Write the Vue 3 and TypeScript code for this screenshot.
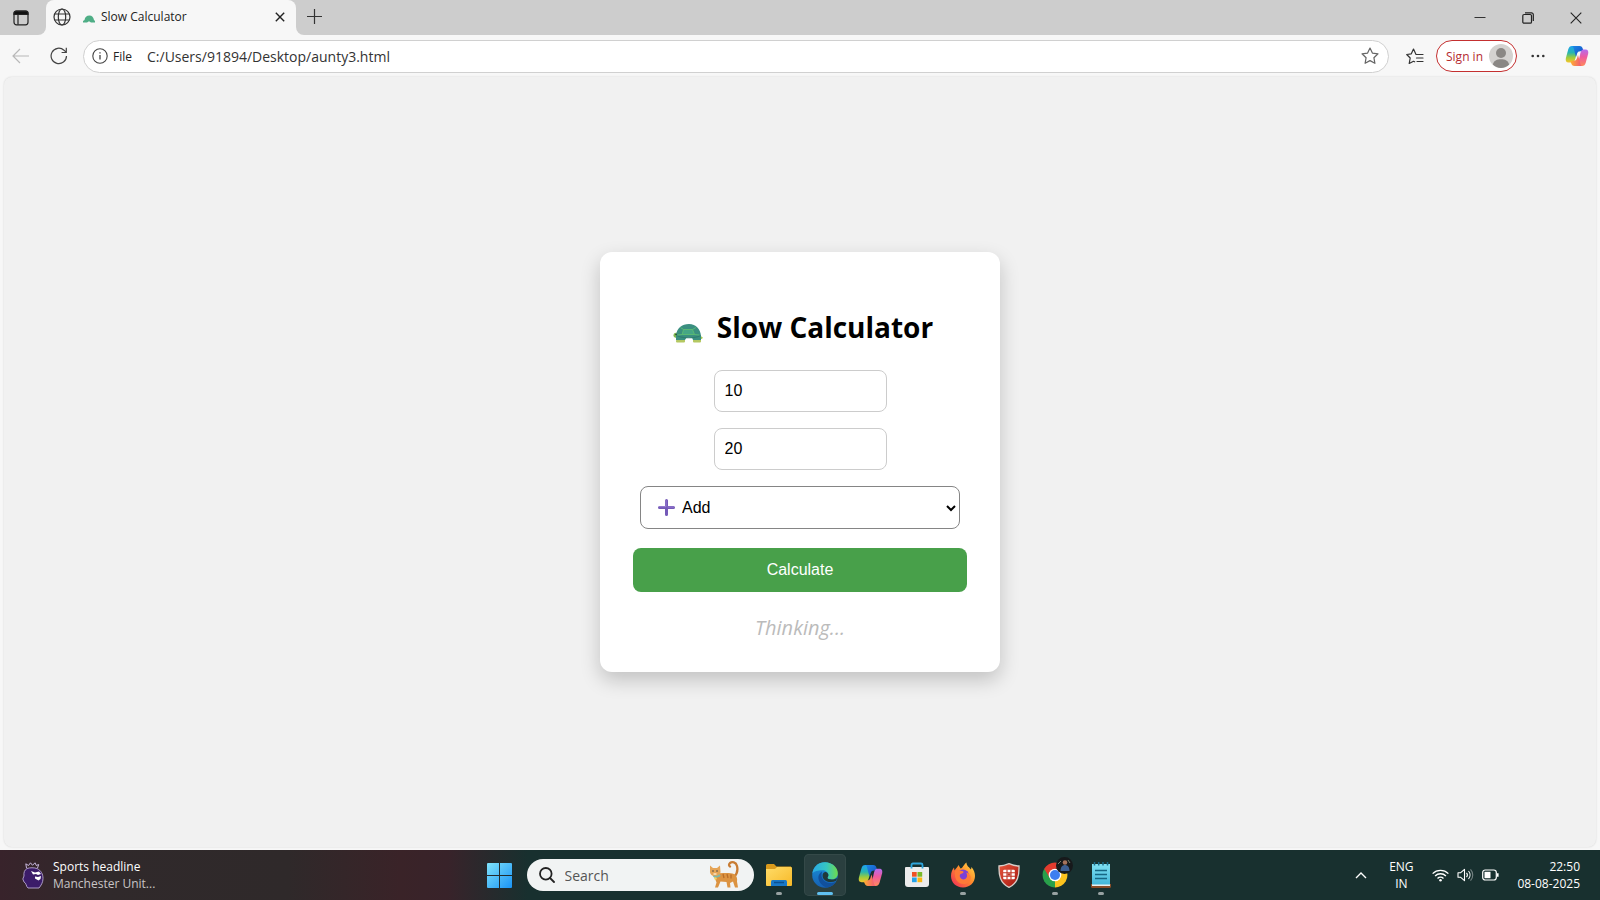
<script setup lang="ts">
import { ref } from 'vue'

const first = ref<number>(10)
const second = ref<number>(20)
const operation = ref<string>('add')
const query = ref<string>('')
const address = ref<string>('C:/Users/91894/Desktop/aunty3.html')
const status = ref<string>('Thinking...')

const operations: { value: string; label: string }[] = [
  { value: 'add', label: 'Add' },
  { value: 'subtract', label: 'Subtract' },
  { value: 'multiply', label: 'Multiply' },
  { value: 'divide', label: 'Divide' },
]

let timer: number | undefined

function calculate(): void {
  status.value = 'Thinking...'
  window.clearTimeout(timer)
  timer = window.setTimeout(() => {
    const a = first.value
    const b = second.value
    const results: Record<string, number> = {
      add: a + b,
      subtract: a - b,
      multiply: a * b,
      divide: a / b,
    }
    status.value = String(results[operation.value])
  }, 5000)
}
</script>

<template>
  <div class="screen">
    <svg class="defs" aria-hidden="true">
      <defs>
        <linearGradient id="cop-a" x1="0" y1="0" x2="0" y2="1">
          <stop offset="0" stop-color="#1fa2f0" /><stop offset=".4" stop-color="#27b5b0" />
          <stop offset=".7" stop-color="#9ccb3c" /><stop offset="1" stop-color="#f6c52c" />
        </linearGradient>
        <linearGradient id="cop-b" x1="0" y1="1" x2="0" y2="0">
          <stop offset="0" stop-color="#b36cf0" /><stop offset=".45" stop-color="#ee5aa0" />
          <stop offset="1" stop-color="#ff8a5a" />
        </linearGradient>
        <linearGradient id="cop-c" x1="0" y1="0" x2="1" y2="1">
          <stop offset="0" stop-color="#1c8be6" /><stop offset="1" stop-color="#1746c4" />
        </linearGradient>
        <linearGradient id="cop-d" x1="1" y1="0" x2="0" y2="0">
          <stop offset="0" stop-color="#ffb02e" /><stop offset="1" stop-color="#f0527c" />
        </linearGradient>
        <symbol id="copilot" viewBox="0 0 24 24">
          <path d="M7 2h7l-3.800 13c-.7 2.300-1.700 3.500-4 3.500H3.500C1 18.500.3 16.500.9 14L3.200 5.500C3.900 3 5 2 7 2z" fill="url(#cop-a)" />
          <path d="M7 2h7.500c2 0 2.800 1 3.400 3l.7 2.300h-3.100c-2 0-3 .8-3.500 2.500L11 13 9 5.500C8.600 3.500 8 2.200 7 2z" fill="url(#cop-c)" />
          <g transform="rotate(180 12 12)">
            <path d="M7 2h4.500L8.600 15c-.7 2.300-1.300 3.500-3 3.500H3.500C1 18.500.3 16.500.9 14L3.200 5.500C3.900 3 5 2 7 2z" fill="url(#cop-b)" />
            <path d="M7 2h7.500c2 0 2.800 1 3.400 3l.7 2.300h-3.100c-2 0-3 .8-3.500 2.500L11 13 9 5.500C8.600 3.500 8 2.200 7 2z" fill="url(#cop-d)" />
          </g>
        </symbol>
        <symbol id="turtle" viewBox="0 0 30 20">
          <path d="M4.500 10C2 9 .5 10.500.5 12.200c0 1.800 1.200 2.600 3.500 2.800z" fill="#7fb850" />
          <path d="M27 12.500l2.800 2-.8 1.400-3-.5z" fill="#a6c850" />
          <path d="M3.500 15h8.500v3.500a1 1 0 0 1-1 1H4a1 1 0 0 1-1-1zM20 15h8v3.500a1 1 0 0 1-1 1h-6a1 1 0 0 1-1-1z" fill="#b4c862" />
          <path d="M3 17V13C3.500 5 9 1 16 1c7 0 11.500 5 12 12v4h-8l-1-2.500h-5.500L12 17z" fill="#3a8f80" />
          <path d="M4 12.500c4 3 19 3 23.500 0" fill="none" stroke="#2f7d70" stroke-width="1.200" />
          <path d="M10.500 6.500h9l2 5H9.200zM10.500 6.500L7.500 4.500M19.500 6.500l3.500-2M9.200 11.500l-5 .5M21.500 11.500l5 .5" fill="#46a685" stroke="#5cbc72" stroke-width=".9" />
          <circle cx="3" cy="11.500" r=".8" fill="#243b2b" />
        </symbol>
        <linearGradient id="win" gradientUnits="userSpaceOnUse" x1="0" y1="0" x2="25" y2="25">
          <stop offset="0" stop-color="#7fe3fb" /><stop offset="1" stop-color="#1a93f5" />
        </linearGradient>
        <linearGradient id="folder" x1="0" y1="0" x2="1" y2="1">
          <stop offset="0" stop-color="#ffdc68" /><stop offset="1" stop-color="#f7b928" />
        </linearGradient>
        <linearGradient id="edge-top" x1="0" y1="0" x2="1" y2="0">
          <stop offset="0" stop-color="#2aa9e6" /><stop offset=".55" stop-color="#35c5c2" />
          <stop offset="1" stop-color="#6fdc4c" />
        </linearGradient>
        <linearGradient id="edge-low" x1="0" y1="0" x2="0" y2="1">
          <stop offset="0" stop-color="#1b93dc" /><stop offset="1" stop-color="#155fb2" />
        </linearGradient>
        <linearGradient id="fox" x1="1" y1="0" x2="0" y2="1">
          <stop offset="0" stop-color="#ffe04a" /><stop offset=".45" stop-color="#ff8c2c" />
          <stop offset="1" stop-color="#f0245c" />
        </linearGradient>
        <linearGradient id="shield" x1="0" y1="0" x2="1" y2="1">
          <stop offset="0" stop-color="#e9573c" /><stop offset="1" stop-color="#a3150f" />
        </linearGradient>
        <linearGradient id="note" x1="0" y1="0" x2="0" y2="1">
          <stop offset="0" stop-color="#7fe0f2" /><stop offset="1" stop-color="#3fb4d8" />
        </linearGradient>
      </defs>
    </svg>

    <header class="tabstrip">
      <button class="tab-actions" aria-label="Tab actions">
        <svg width="16" height="16" viewBox="0 0 16 16" fill="none" stroke="#222" stroke-width="1.200">
          <rect x="1" y="1.200" width="14" height="13.600" rx="2.500" />
          <path d="M1 3.200a2 2 0 0 1 2-2h10a2 2 0 0 1 2 2V4.500H1z" fill="#111" />
          <path d="M5 5v9.500" />
        </svg>
      </button>
      <div class="tab">
        <svg width="18" height="18" viewBox="0 0 18 18" fill="none" stroke="#333" stroke-width="1.200">
          <circle cx="9" cy="9" r="8" /><ellipse cx="9" cy="9" rx="3.700" ry="8" />
          <path d="M1.700 6h14.600M1.700 12h14.600" />
        </svg>
        <svg class="tab-turtle" width="12" height="8" viewBox="0 0 12 8">
          <path d="M0 7.500V6l1.500-1C2 2 3.500.5 6.500.5c2.500 0 4 2 4.500 4.500l1 1v1.500H8L6 6.300 4 7.500z" fill="#4fae86" />
        </svg>
        <span class="tab-title">Slow Calculator</span>
        <button aria-label="Close tab">
          <svg width="10" height="10" viewBox="0 0 10 10" stroke="#222" stroke-width="1.400"><path d="M.8.8l8.400 8.400M9.200.8L.8 9.200" /></svg>
        </button>
      </div>
      <button class="new-tab" aria-label="New tab">
        <svg width="15" height="15" viewBox="0 0 15 15" stroke="#333" stroke-width="1.200"><path d="M7.500 0v15M0 7.500h15" /></svg>
      </button>
      <div class="window-controls">
        <button aria-label="Minimize">
          <svg width="12" height="12" viewBox="0 0 12 12" stroke="#333"><path d="M.5 5.500h11" /></svg>
        </button>
        <button aria-label="Restore">
          <svg width="12" height="12" viewBox="0 0 12 12" fill="none" stroke="#222" stroke-width="1.200">
            <rect x=".8" y="2.500" width="8.700" height="8.700" rx="1.300" />
            <path d="M3 .8h6.500a1.800 1.800 0 0 1 1.800 1.800V9" />
          </svg>
        </button>
        <button aria-label="Close window">
          <svg width="12" height="12" viewBox="0 0 12 12" stroke="#222" stroke-width="1.100"><path d="M.7.7l10.600 10.600M11.300.7L.7 11.300" /></svg>
        </button>
      </div>
    </header>

    <nav class="toolbar">
      <button class="tool" aria-label="Back">
        <svg width="17" height="16" viewBox="0 0 17 16" fill="none" stroke="#b8b8b8" stroke-width="1.200"><path d="M17 8H1M8 1L1 8l7 7" /></svg>
      </button>
      <button class="tool" aria-label="Refresh">
        <svg width="18" height="18" viewBox="0 0 18 18" fill="none" stroke="#444" stroke-width="1.200">
          <path d="M16.500 9A7.700 7.700 0 1 1 14 3.200l2 2M16.300.8v4.700h-4.700" />
        </svg>
      </button>
      <div class="address">
        <svg width="16" height="16" viewBox="0 0 16 16" fill="none" stroke="#444" stroke-width="1.100">
          <circle cx="8" cy="8" r="7.200" /><path d="M8 7v4.500M8 4.200v1.400" stroke-width="1.300" />
        </svg>
        <span class="scheme">File</span>
        <input v-model="address" type="text" aria-label="Address" />
        <button aria-label="Add to favorites">
          <svg width="18" height="18" viewBox="0 0 18 18" fill="none" stroke="#666" stroke-width="1.200" stroke-linejoin="round">
            <path d="M9 1l2.400 5.100 5.600.7-4.100 3.900 1 5.600L9 13.600l-4.900 2.700 1-5.600L1 6.800l5.600-.7z" />
          </svg>
        </button>
      </div>
      <button class="tool favorites" aria-label="Favorites">
        <svg width="18" height="17" viewBox="0 0 18 17" fill="none" stroke="#333" stroke-width="1.200" stroke-linejoin="round" stroke-linecap="round">
          <path d="M11 6.500h-1L7.500 1 5.300 5.800l-4.600.7 3.500 3.500-1 5.500 4.300-2.200 1.200.5M11 6.500h6M10.500 10H17M11 13.500h6" />
        </svg>
      </button>
      <button class="sign-in">
        <span>Sign in</span>
        <svg width="24" height="24" viewBox="0 0 24 24">
          <circle cx="12" cy="12" r="12" fill="#d4d2d0" /><circle cx="12" cy="9" r="5" fill="#8a8784" />
          <path d="M3.800 20.500c1-4 4.200-5.300 8.200-5.300s7.200 1.300 8.200 5.300A12 12 0 0 1 12 24a12 12 0 0 1-8.200-3.500z" fill="#8a8784" />
        </svg>
      </button>
      <button class="tool more" aria-label="Settings and more">
        <svg width="14" height="4" viewBox="0 0 14 4" fill="#333"><circle cx="1.700" cy="2" r="1.300" /><circle cx="7" cy="2" r="1.300" /><circle cx="12.300" cy="2" r="1.300" /></svg>
      </button>
      <button class="tool" aria-label="Copilot"><svg width="24" height="24"><use href="#copilot" /></svg></button>
    </nav>

    <main class="page">
      <form class="card" @submit.prevent="calculate">
        <h1><svg width="30" height="20" aria-hidden="true"><use href="#turtle" /></svg><span>Slow Calculator</span></h1>
        <input v-model.number="first" class="number" type="number" aria-label="First number" />
        <input v-model.number="second" class="number" type="number" aria-label="Second number" />
        <div class="picker">
          <svg class="plus" width="17" height="17" viewBox="0 0 17 17" stroke-linecap="round">
            <path d="M8.500 1.500v14M1.500 8.500h14" stroke="#7459b8" stroke-width="3" />
            <path d="M8 1.500v6.200H1.500M10 8h5.500" stroke="#9a80d2" fill="none" />
          </svg>
          <select v-model="operation" aria-label="Operation">
            <option v-for="item in operations" :key="item.value" :value="item.value">{{ item.label }}</option>
          </select>
          <svg class="arrow" width="10" height="7" viewBox="0 0 10 7" fill="none" stroke="#000" stroke-width="2"><path d="M1 1l4 4 4-4" /></svg>
        </div>
        <button class="calculate" type="submit">Calculate</button>
        <p class="status">{{ status }}</p>
      </form>
    </main>

    <footer class="taskbar">
      <button class="widget">
        <svg width="22" height="27" viewBox="0 0 22 27">
          <path d="M4.500 6L3.800 1.800l2.700 1.700L8.500.8l2 2.500L13 .8l1.300 2.700 2.400-1L15.500 6" fill="none" stroke="#c9b9de" stroke-width="1" />
          <path d="M5 6.500c3-1 7-1 10 0 4 2 6 5.500 6 10 0 4-2 7-4 9.500H6C4 24.500 4.500 21 2 20l-1.200-3L2 14c-.5-3.500.5-6 3-7.500z" fill="#3b1c69" stroke="#b9a9d2" stroke-width=".9" />
          <path d="M9 9l4 1.500 4-1 2 2.500-3 1-2-1-3 .5zM13 14.500l3 .5 3-1-.5 3-2 1.500-3.500-2z" fill="#fff" />
        </svg>
        <span class="widget-text"><span>Sports headline</span><span class="dim">Manchester Unit...</span></span>
      </button>

      <div class="apps">
        <button class="app" aria-label="Start">
          <svg width="25" height="25" viewBox="0 0 25 25" fill="url(#win)"><path d="M1 0h11v12H0V1a1 1 0 0 1 1-1zM13 0h11a1 1 0 0 1 1 1v11H13zM0 13h12v12H1a1 1 0 0 1-1-1zM13 13h12v11a1 1 0 0 1-1 1H13z" /></svg>
        </button>
        <label class="search">
          <svg width="16" height="16" viewBox="0 0 16 16" fill="none" stroke="#222" stroke-width="1.800" stroke-linecap="round"><circle cx="6.800" cy="6.800" r="5.800" /><path d="M11 11l4 4" /></svg>
          <input v-model="query" type="text" placeholder="Search" aria-label="Search" />
          <svg width="30" height="28" viewBox="0 0 30 28">
            <path d="M25 16c3-3 4-7 3-11-1-4-5-4.500-7-3-1.500 1.500-1 3 0 3.500" fill="none" stroke="#c87c33" stroke-width="2.300" stroke-linecap="round" />
            <path d="M7 12c5 1 12-1 18 1 3 2 3.500 4.500 3 7.500l1 6h-3l-2-6-3 1.500.5 4.500h-3l-1-5.500-6-.5-2.500 6H6l1.500-5L5 15z" fill="#dc9341" />
            <path d="M1 4.500l3 2.500h4l3-2.500.5 6.500c0 3-2 4.500-5 4.500S.5 13 1 10z" fill="#e5a456" />
            <path d="M14 13l1 4M18 13l1 4M22 13.500v4" stroke="#b86c28" stroke-width="1.300" />
            <path d="M4.500 15c2 1.500 5 .5 6.500-1" stroke="#7cb8ac" stroke-width="2" fill="none" />
            <circle cx="6.500" cy="17.500" r="1.200" fill="#f3d35c" /><circle cx="4" cy="10" r=".8" fill="#444" /><circle cx="8" cy="10" r=".8" fill="#444" />
            <path d="M4.500 13h3" stroke="#fbe6c4" stroke-width="1.500" />
          </svg>
        </label>
        <button class="app running" aria-label="File Explorer">
          <svg width="26" height="24" viewBox="0 0 26 24">
            <path d="M0 2.500A1.500 1.500 0 0 1 1.500 1H8l2.500 2.500H25V10H0z" fill="#d99a1c" />
            <path d="M0 6h9l2-2h14a1 1 0 0 1 1 1v17a1 1 0 0 1-1 1H1a1 1 0 0 1-1-1z" fill="url(#folder)" />
            <path d="M5 23v-4.500A1.500 1.500 0 0 1 6.500 17h13a1.500 1.500 0 0 1 1.500 1.500V23z" fill="#1a78c6" />
            <path d="M8 19.500h10" stroke="#0c508f" stroke-width="1.500" />
          </svg>
        </button>
        <button class="app running active" aria-label="Microsoft Edge">
          <svg width="26" height="26" viewBox="0 0 26 26">
            <circle cx="13" cy="13" r="12.800" fill="url(#edge-low)" />
            <path d="M.4 11.500C1.200 5 6 .2 13 .2c7 0 12.800 5 12.800 11 0 4-3 6.300-6.300 6.300-2.500 0-4-.8-4-1.700 0-.6.900-1 .9-2.700 0-2.700-2.700-4.800-6-4.800-4.500 0-8.500 1-10 3.200z" fill="url(#edge-top)" />
            <path d="M10 9.500c-3 2-4.500 5-3 9s5.500 7.200 9.500 6.800c3.500-1 6-3 7.500-5.500-2 1-4 1.500-6 1.300C13 20.800 9.500 17 9.500 13.500c0-1.500.3-3 .5-4z" fill="#11509c" />
            <path d="M15.500 15.800c0-.6.900-1 .9-2.700 0-1.300-.8-2.400-2-2.900-1.600-.6-3.400.5-3.700 2.200-.8 4 2.800 7.600 8.100 7.600 2 0 3.700-.4 5.200-1.200l1.700-3.300c-1.500 1.500-3.500 2-6.200 2-2.500 0-4-.8-4-1.700z" fill="#20393a" />
          </svg>
        </button>
        <button class="app" aria-label="Copilot"><svg width="25" height="25"><use href="#copilot" /></svg></button>
        <button class="app" aria-label="Microsoft Store">
          <svg width="26" height="26" viewBox="0 0 26 26">
            <path d="M2 5h22a1 1 0 0 1 1 1v16a3 3 0 0 1-3 3H4a3 3 0 0 1-3-3V6a1 1 0 0 1 1-1z" fill="#ececec" />
            <path d="M7.500 6.500V3A1.500 1.500 0 0 1 9 1.500h8A1.500 1.500 0 0 1 18.500 3v3.500" fill="none" stroke="#2ea5dc" stroke-width="1.800" />
            <path d="M8 10h4.700v4.700H8z" fill="#ee5125" /><path d="M13.500 10h4.700v4.700h-4.700z" fill="#7ab928" />
            <path d="M8 15.500h4.700v4.700H8z" fill="#25a2e8" /><path d="M13.500 15.500h4.700v4.700h-4.700z" fill="#fbb711" />
          </svg>
        </button>
        <button class="app running" aria-label="Firefox">
          <svg width="26" height="26" viewBox="0 0 26 26">
            <path d="M13 25.500C6 25.500 1 20.500 1 14c0-4 1.500-6.500 3-8.500l.5 3C6 6 7.500 5.500 8.500 3L10.500 6.500C13 6 13.500 2.500 16.500.5c0 3.500 2.500 4.500 4.500 7l.5-2.500c2.500 3 3.500 6 3.500 9 0 6.500-5 11.500-12 11.500z" fill="url(#fox)" />
            <circle cx="13" cy="13.500" r="6" fill="#7b3fd6" />
            <path d="M5 9c3-1.500 4.500 0 7 0 2 0 2 2 0 2.500-2.500.5-2.500 2-2 3.500 1.500 3.500 6 3 7-.5.5-2.500-1-4-1-4 5 1 6 6 3 9.500C14 24.500 3.500 22 5 9z" fill="#ff7a38" />
          </svg>
        </button>
        <button class="app" aria-label="Security">
          <svg width="22" height="25" viewBox="0 0 22 25">
            <path d="M1 3C5 3 8 2 11 .7 14 2 17 3 21 3c.3 9-1 17-10 21.300C2 20 .7 12 1 3z" fill="url(#shield)" stroke="#d8cfca" stroke-width="1.300" />
            <rect x="5.200" y="6.700" width="11.600" height="9.600" rx="1" fill="#fff" />
            <path d="M5 9.800h12M5 13.200h12M9 6.500v10M13 6.500v10" stroke="#c23524" stroke-width="1.100" />
            <path d="M9.500 10.300h3v2.400h-3z" fill="#c23524" />
          </svg>
        </button>
        <button class="app running" aria-label="Google Chrome">
          <svg width="26" height="26" viewBox="0 0 26 26">
            <path d="M13 13l10.800-6.200A12.500 12.500 0 0 1 13 25.500z" fill="#fcc31e" />
            <path d="M13 13v12.500A12.500 12.500 0 0 1 2.200 6.800z" fill="#29a04b" />
            <path d="M2.200 6.800A12.500 12.500 0 0 1 23.800 6.800H13L7.600 16.100z" fill="#e33b2e" />
            <path d="M18.200 16L13 25.500V13l5-6.200h5.800z" fill="#fcc31e" />
            <path d="M2.200 6.800l5.400 9.300L13 19l-1 6.500z" fill="#29a04b" />
            <circle cx="13" cy="13" r="6.300" fill="#fff" /><circle cx="13" cy="13" r="5" fill="#3d7ff0" />
          </svg>
          <svg class="avatar" width="17" height="17" viewBox="0 0 17 17">
            <circle cx="8.500" cy="8.500" r="8.500" fill="#17191b" /><circle cx="9" cy="5.500" r="2.300" fill="#a5735c" />
            <path d="M4.500 14c0-4 2-6 4.500-6s4.500 2 4.500 6z" fill="#3c5e91" /><path d="M2 7l3-3M12 3l2 3" stroke="#75816c" />
          </svg>
        </button>
        <button class="app running" aria-label="Notepad">
          <svg width="20" height="26" viewBox="0 0 20 26">
            <path d="M0 22h20v2.500a1.500 1.500 0 0 1-1.500 1.500h-17A1.500 1.500 0 0 1 0 24.500z" fill="#8a4d28" />
            <path d="M1 2h18v22H1z" fill="url(#note)" /><path d="M1 22.500h18v1.500H1z" fill="#e8f0f0" />
            <path d="M3.500 0v3.500M7.700 0v3.500M12 0v3.500M16.500 0v3.500" stroke="#1b6a88" stroke-width="1.500" />
            <path d="M4 8.500h12M4 12.500h12M4 16.500h12" stroke="#176784" stroke-width="1.400" />
          </svg>
        </button>
      </div>

      <div class="tray">
        <button class="chevron" aria-label="Show hidden icons">
          <svg width="12" height="8" viewBox="0 0 12 8" fill="none" stroke="#fff" stroke-width="1.400"><path d="M1 7l5-5 5 5" /></svg>
        </button>
        <button class="language"><span>ENG</span><span>IN</span></button>
        <button class="quick" aria-label="Network, volume and battery">
          <svg width="17" height="14" viewBox="0 0 16 13" fill="none" stroke="#fff" stroke-width="1.300">
            <path d="M.6 5.200a10.400 10.400 0 0 1 14.800 0M2.900 7.500a7.200 7.200 0 0 1 10.200 0M5.200 9.700a4 4 0 0 1 5.600 0" /><circle cx="8" cy="11.500" r="1.200" fill="#fff" stroke="none" />
          </svg>
          <svg width="17" height="14" viewBox="0 0 17 14" fill="none" stroke="#fff" stroke-width="1.100" stroke-linejoin="round">
            <path d="M1 4.700h2.700L7.500 1.300v11.400L3.700 9.300H1zM9.500 4.800c1.100 1.300 1.100 3.100 0 4.400M11.500 3c2 2.300 2 5.700 0 8" /><path d="M13.500 1.300c3 3.300 3 8.100 0 11.400" opacity=".4" />
          </svg>
          <svg width="17" height="12" viewBox="0 0 17 12" fill="none" stroke="#fff" stroke-width="1.200">
            <rect x=".7" y="1" width="13.600" height="10" rx="2.500" /><rect x="2.500" y="2.800" width="6" height="6.400" fill="#fff" stroke="none" /><path d="M15.800 4.300v3.400" stroke-width="1.600" />
          </svg>
        </button>
        <button class="clock"><span>22:50</span><span>08-08-2025</span></button>
      </div>
    </footer>
  </div>
</template>

<style>
body {
  margin: 0;
}
</style>

<style scoped>
.screen {
  display: flex;
  flex-direction: column;
  min-height: 100vh;
  background: #f7f7f7;
  font-family: "Open Sans", "Noto Sans", sans-serif;
  font-size: 12px;
  color: #222;
}
.defs {
  position: absolute;
  width: 0;
  height: 0;
}
button {
  display: flex;
  align-items: center;
  justify-content: center;
  padding: 0;
  border: 0;
  background: none;
  color: inherit;
  font: inherit;
}
input {
  min-width: 0;
  border: 0;
  outline: 0;
  background: none;
  color: inherit;
  font: inherit;
}
svg {
  flex: none;
}

.tabstrip {
  display: flex;
  height: 35px;
  background: linear-gradient(#cdcdcd 50%, #f7f7f7 50%);
}
.tab-actions {
  width: 46px;
  padding-right: 4px;
  border-radius: 0 0 8px 0;
  background: #cdcdcd;
}
.tab {
  display: flex;
  align-items: center;
  width: 250px;
  box-sizing: border-box;
  padding: 0 11px 2px 7px;
  border-radius: 8px 8px 0 0;
  background: #f7f7f7;
}
.tab-turtle {
  margin: 4px 6px 0 12px;
}
.tab-title {
  flex: 1;
}
.new-tab {
  width: 36px;
  padding-bottom: 3px;
  border-radius: 0 0 0 8px;
  background: #cdcdcd;
}
.window-controls {
  display: flex;
  flex: 1;
  justify-content: flex-end;
  background: #cdcdcd;
}
.window-controls button {
  width: 48px;
}

.toolbar {
  display: flex;
  align-items: center;
  height: 42px;
  padding: 0 8px 0 5px;
}
.tool {
  width: 30px;
  height: 30px;
}
.tool + .tool {
  margin-left: 9px;
}
.address {
  display: flex;
  flex: 1;
  align-items: center;
  height: 33px;
  box-sizing: border-box;
  margin-left: 9px;
  padding: 0 9px 0 8px;
  border: 1px solid #d0d0d0;
  border-radius: 17px;
  background: #fff;
}
.scheme {
  margin: 0 15px 0 5px;
}
.address input {
  flex: 1;
  padding: 0;
  font-size: 14px;
  color: #333;
}
.favorites {
  margin-left: 11px;
}
.sign-in {
  gap: 6px;
  height: 32px;
  margin-left: 6px;
  padding: 0 3px 0 9px;
  border: 1px solid #c43030;
  border-radius: 16px;
  background: #fff;
  color: #b52a30;
}
.more {
  margin-left: 6px;
}

.page {
  display: flex;
  flex: 1;
  align-items: center;
  justify-content: center;
  margin: 0 4px 3px;
  border-radius: 8px;
  background: #f1f1f1;
  box-shadow: 0 0 2px rgba(0, 0, 0, 0.15);
}
.card {
  display: flex;
  flex-direction: column;
  align-items: center;
  width: 400px;
  box-sizing: border-box;
  padding: 33px 33px 31px;
  border-radius: 12px;
  background: #fff;
  box-shadow: 0 8px 20px rgba(0, 0, 0, 0.2);
}
h1 {
  display: flex;
  align-items: center;
  gap: 14px;
  margin: 21px 0;
  padding-left: 6px;
  font-size: 28px;
  font-weight: 700;
  line-height: 43px;
  color: #000;
}
h1 svg {
  margin-top: 10px;
}
.number {
  width: 173px;
  height: 42px;
  box-sizing: border-box;
  margin-bottom: 16px;
  padding: 0 10px 1px;
  border: 1px solid #ccc;
  border-radius: 8px;
  font-family: "Liberation Sans", sans-serif;
  font-size: 16px;
  color: #000;
}
.picker {
  position: relative;
  width: 320px;
  height: 43px;
  margin-bottom: 19px;
}
.picker select {
  width: 100%;
  height: 100%;
  padding: 0 41px;
  appearance: none;
  border: 1px solid #858585;
  border-radius: 8px;
  background: #fff;
  color: #000;
  font-family: "Liberation Sans", sans-serif;
  font-size: 16px;
}
.plus {
  position: absolute;
  top: 13px;
  left: 18px;
}
.arrow {
  position: absolute;
  top: 19px;
  right: 4px;
}
.calculate {
  width: 100%;
  height: 44px;
  border-radius: 8px;
  background: #48a04a;
  color: #fff;
  font-family: "Liberation Sans", sans-serif;
  font-size: 16px;
}
.status {
  margin: 22px 0 0;
  color: #bbb;
  font-size: 20px;
  font-style: italic;
  line-height: 27px;
}

.taskbar {
  display: grid;
  grid-template-columns: 1fr auto 1fr;
  align-items: center;
  height: 50px;
  background: linear-gradient(90deg, #38232b 0%, #30292b 6%, #2f292a 18%, #3a2328 25%, #38232a 28%, #18302f 33%, #18302f 100%);
  color: #fff;
}
.widget {
  gap: 9px;
  margin-left: 22px;
  justify-self: start;
}
.widget-text,
.language,
.clock {
  display: flex;
  flex-direction: column;
  line-height: 17px;
}
.widget-text {
  align-items: flex-start;
}
.dim {
  color: #c8c4c5;
}
.apps {
  display: flex;
  align-items: center;
  gap: 4px;
}
.app {
  position: relative;
  width: 42px;
  height: 42px;
  border-radius: 5px;
}
.active {
  background: #2a3f3f;
  box-shadow: inset 0 0 0 1px #344948;
}
.running::after {
  content: "";
  position: absolute;
  bottom: 1px;
  left: 18px;
  width: 6px;
  height: 3px;
  border-radius: 2px;
  background: #98a2a2;
}
.active::after {
  left: 13px;
  width: 16px;
  background: #60c0f0;
}
.avatar {
  position: absolute;
  top: 3px;
  right: 3px;
}
.search {
  display: flex;
  align-items: center;
  width: 227px;
  height: 32px;
  box-sizing: border-box;
  margin: 0 0 0 2px;
  padding: 0 15px 0 12px;
  border-radius: 16px;
  background: #f1f3f3;
}
.search input {
  flex: 1;
  padding: 0 0 0 10px;
  font-size: 14px;
}
.search input::placeholder {
  color: #555;
  opacity: 1;
}
.tray {
  display: flex;
  align-items: center;
  justify-self: end;
  padding-right: 20px;
}
.language {
  width: 30px;
  margin: 0 16px 0 19px;
}
.quick {
  gap: 8px;
}
.clock {
  align-items: flex-end;
  margin-left: 18px;
}
</style>
